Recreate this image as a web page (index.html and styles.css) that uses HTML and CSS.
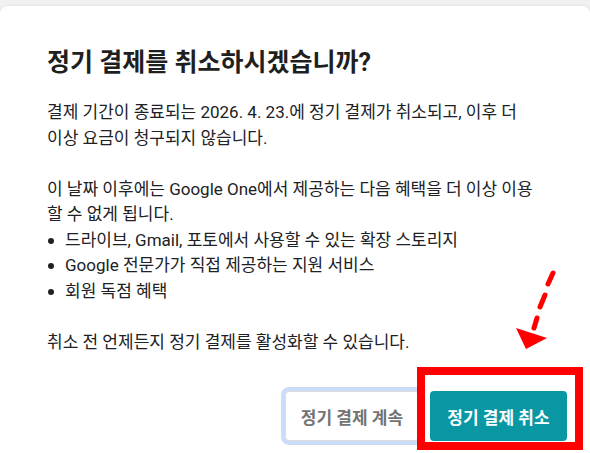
FILE: index.html
```html
<!DOCTYPE html>
<html lang="ko">
<head>
    <meta charset="UTF-8">
    <meta name="viewport" content="width=device-width, initial-scale=1.0">
    <title>정기 결제 취소</title>
    <link rel="stylesheet" href="styles.css">
</head>
<body>
    <div class="dialog">
        <h1 class="dialog-title">정기 결제를 취소하시겠습니까?</h1>
        <p>결제 기간이 종료되는 2026. 4. 23.에 정기 결제가 취소되고, 이후 더<br>이상 요금이 청구되지 않습니다.</p>
        <p class="benefits-intro">이 날짜 이후에는 Google One에서 제공하는 다음 혜택을 더 이상 이용<br>할 수 없게 됩니다.</p>
        <ul class="benefits">
            <li>드라이브, Gmail, 포토에서 사용할 수 있는 확장 스토리지</li>
            <li>Google 전문가가 직접 제공하는 지원 서비스</li>
            <li>회원 독점 혜택</li>
        </ul>
        <p class="note">취소 전 언제든지 정기 결제를 활성화할 수 있습니다.</p>
        <div class="actions">
            <button class="btn btn-keep">정기 결제 계속</button>
            <button class="btn btn-cancel">정기 결제 취소</button>
        </div>
    </div>

    <!-- annotation overlay -->
    <div class="highlight-box"></div>
    <svg class="arrow" width="590" height="453" viewBox="0 0 590 453">
        <line x1="553" y1="273" x2="548" y2="284" stroke="#ff0000" stroke-width="5" stroke-linecap="round"/>
        <line x1="545" y1="295" x2="540" y2="307" stroke="#ff0000" stroke-width="5" stroke-linecap="round"/>
        <line x1="537" y1="318" x2="534" y2="328" stroke="#ff0000" stroke-width="5" stroke-linecap="round"/>
        <polygon points="516,328 547,338 526,349" fill="#ff0000"/>
    </svg>
</body>
</html>
```

FILE: styles.css
```css
html, body {
    height: 100%;
}
body {
    margin: 0;
    background: #f1f1f1;
    font-family: Roboto, "Noto Sans CJK KR", sans-serif;
    color: #202124;
    overflow: hidden;
    position: relative;
}
.dialog {
    margin-top: 6px;
    min-height: 447px;
    box-sizing: border-box;
    background: #fff;
    border-radius: 8px 8px 0 0;
    box-shadow: 0 0 3px rgba(0, 0, 0, 0.08);
    padding: 41px 23px 0 47px;
}
.dialog-title {
    margin: 0 0 21px;
    font-size: 25px;
    line-height: 32px;
    font-weight: 700;
    color: #1f1f1f;
}
p {
    margin: 0;
    font-size: 17px;
    line-height: 25.5px;
}
.benefits-intro {
    margin-top: 25.5px;
}
.benefits {
    list-style: none;
    margin: 0;
    padding: 0;
    font-size: 17px;
    line-height: 25.5px;
}
.benefits li {
    display: flex;
    align-items: center;
}
.benefits li::before {
    content: "";
    flex: none;
    width: 6px;
    height: 6px;
    margin: 1px 11px 0 1px;
    border-radius: 50%;
    background: #202124;
}
.note {
    margin-top: 25.5px;
}
.actions {
    display: flex;
    justify-content: flex-end;
    gap: 11px;
    margin-top: 36px;
}
.btn {
    height: 50px;
    padding: 0;
    border-radius: 4px;
    font-family: inherit;
    font-size: 17px;
    font-weight: 700;
}
.btn-keep {
    width: 134px;
    background: #fff;
    color: #737373;
    border: 1px solid #dadce0;
    box-shadow: 0 0 0 4px #c9ddf8;
}
.btn-cancel {
    width: 137px;
    background: #0a97a4;
    color: #fff;
    border: none;
}
.highlight-box {
    position: absolute;
    left: 417px;
    top: 367px;
    width: 166px;
    height: 83px;
    box-sizing: border-box;
    border: 8px solid #ff0000;
}
.arrow {
    position: absolute;
    left: 0;
    top: 0;
    pointer-events: none;
}
```
